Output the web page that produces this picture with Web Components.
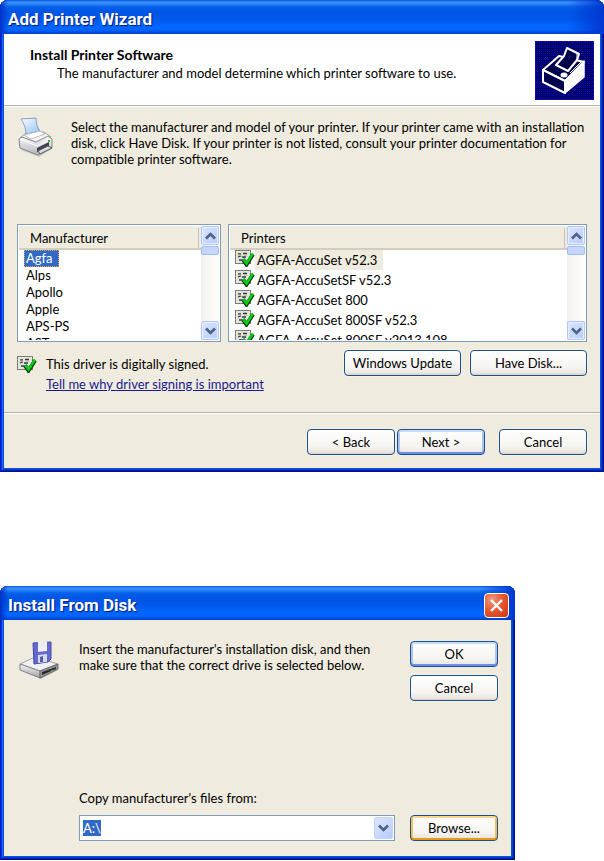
<!DOCTYPE html>
<html lang="en">
<head>
<meta charset="utf-8">
<title>Add Printer Wizard</title>
<style>
  body {
    margin: 0;
    background: #fff;
    color: #000;
    font: 13px/16px Lato, "Liberation Sans", sans-serif;
    --face: #efebde;
    --field-border: #7f9db9;
    --select: #316ac5;
  }
  main {
    display: flex;
    flex-direction: column;
    gap: 114px;
  }
  install-disk {
    width: 100%;
    max-width: 515px;
  }
</style>
</head>
<body>
<main>
  <printer-wizard></printer-wizard>
  <install-disk></install-disk>
</main>

<script>
class XpWindow extends HTMLElement {
  constructor() {
    super();
    this.attachShadow({ mode: 'open' });
  }

  connectedCallback() {
    const close = this.hasAttribute('closable') ? `
      <button type="button" aria-label="Close">
        <svg viewBox="0 0 23 23" width="23" height="23"><path d="M6 6l11 11M17 6L6 17" stroke="#fff" stroke-width="2.4"/></svg>
      </button>` : '';
    this.shadowRoot.innerHTML = `
      <style>
        :host {
          display: block;
        }
        section {
          padding: 0 4px 4px;
          border-radius: 8px 8px 0 0;
          background: #0b4fe0;
          box-shadow: inset 1px 0 #0019cf, inset -1px 0 #00138c, inset 0 -1px #00138c,
            inset 2px 0 #0831d9, inset -2px 0 #001ea0, inset 0 -2px #001ea0,
            inset 3px 0 #166aee, inset -3px 0 #0441d8, inset 0 -3px #0441d8;
        }
        header {
          display: flex;
          align-items: center;
          justify-content: space-between;
          height: 34px;
          box-sizing: border-box;
          margin: 0 -4px;
          padding: 4px 6px 0 8px;
          border-radius: 8px 8px 0 0;
          background:
            linear-gradient(90deg, #0032c8, transparent 8px, transparent calc(100% - 36px), #0038d0),
            linear-gradient(#0a50dc, #3a92ff 2px, #2b86fb 4px, #0560ea 7px, #0055e5 12px, #0057ea 19px, #0066ff 26px, #0066ff 30px, #005af0 31px, #0040c8 34px);
        }
        h1 {
          margin: 0;
          color: #fff;
          font-family: Roboto, "Liberation Sans", sans-serif;
          font-size: 17px;
          line-height: 24px;
          font-weight: bold;
          text-shadow: 1px 1px 1px #0a1883;
        }
        button {
          display: flex;
          padding: 0;
          border: 1px solid #fff;
          border-radius: 4px;
          background: radial-gradient(circle at 30% 25%, #f0997c, #e4542e 50%, #c8360c);
        }
        .body {
          background: var(--face);
        }
      </style>
      <section>
        <header><h1>${this.getAttribute('title-text')}</h1>${close}</header>
        <div class="body"><slot></slot></div>
      </section>
    `;
  }
}

class XpButton extends HTMLElement {
  constructor() {
    super();
    this.attachShadow({ mode: 'open' });
    this.shadowRoot.innerHTML = `
      <style>
        :host {
          display: block;
          width: 88px;
        }
        :host([wide]) {
          width: 117px;
        }
        button {
          width: 100%;
          height: 26px;
          padding: 0;
          border: 1px solid #1d4f86;
          border-radius: 4px;
          background: linear-gradient(#fff, #f5f4f0 70%, #ebe7e2 90%, #d8d0c8);
          color: inherit;
          font: inherit;
          box-shadow: 0 0 0 1px rgba(255, 255, 255, 0.3);
        }
        :host([primary]) button {
          box-shadow: inset 0 2px #c6dcfb, inset 0 -2px #6a8eea, inset 2px 0 #a9c4f5, inset -2px 0 #a9c4f5;
        }
        :host([hot]) button {
          box-shadow: inset 0 2px #fcd48a, inset 0 -2px #e79a12, inset 2px 0 #f9bf57, inset -2px 0 #f9bf57;
        }
      </style>
      <button type="button"><slot></slot></button>
    `;
  }
}

// Single column list view with a header and a scroll bar
class XpList extends HTMLElement {
  constructor() {
    super();
    this.attachShadow({ mode: 'open' });
  }

  connectedCallback() {
    const signed = this.hasAttribute('signed');
    const rows = this.getAttribute('items').split('|').map((name, i) => `
      <tr><td>${signed ? '<signed-icon></signed-icon>' : ''}<span class="${i === 0 ? 'current' : ''}">${name}</span></td></tr>`).join('');
    this.shadowRoot.innerHTML = `
      <style>
        :host {
          display: flex;
          box-sizing: border-box;
          height: 118px;
          padding: 1px;
          border: 1px solid var(--field-border);
          background: #fff;
          overflow: hidden;
        }
        .view {
          flex: 1;
          min-width: 0;
          overflow: hidden;
        }
        table {
          width: 100%;
          border-spacing: 0;
        }
        th {
          height: 24px;
          box-sizing: border-box;
          padding: 2px 2px 0 11px;
          border-bottom: 2px solid #d3cdbb;
          background: var(--face);
          font-weight: normal;
          text-align: left;
          line-height: 20px;
        }
        th div {
          border-right: 1px solid #c7c5b2;
        }
        td {
          height: 17px;
          padding: 0 5px;
          line-height: 17px;
          white-space: nowrap;
          vertical-align: top;
        }
        td span {
          display: inline-block;
          padding: 0 2px;
          vertical-align: top;
        }
        .current {
          padding-right: 6px;
          background: var(--select);
          color: #fff;
          outline: 1px dotted #e0a050;
          outline-offset: -1px;
        }
        :host([signed]) td,
        :host([signed]) td span {
          height: 20px;
          line-height: 20px;
        }
        :host([signed]) .current {
          background: var(--face);
          color: inherit;
          outline: none;
        }
        signed-icon {
          vertical-align: top;
        }
        .bar {
          display: flex;
          flex-direction: column;
          width: 18px;
          background: linear-gradient(90deg, #f3f1ec, #fefefb);
        }
        .bar button {
          display: flex;
          align-items: center;
          justify-content: center;
          height: 19px;
          padding: 0;
          border: 1px solid #b2c7f5;
          border-radius: 2px;
          background: linear-gradient(135deg, #dbe6ff, #b7cbfb);
          box-shadow: inset 0 0 0 1px #e6eeff;
        }
        .thumb {
          height: 7px;
          margin: 1px 0 auto;
          border: 1px solid #a5bcf3;
          border-radius: 2px;
          background: #c6d6fd;
        }
      </style>
      <div class="view">
        <table>
          <thead><tr><th scope="col"><div>${this.getAttribute('heading')}</div></th></tr></thead>
          <tbody>${rows}</tbody>
        </table>
      </div>
      <div class="bar">
        <button type="button" aria-label="Scroll up"><svg width="11" height="8" viewBox="0 0 11 8"><path d="M1 6.5l4.5-4.500 4.500 4.500" fill="none" stroke="#4d6185" stroke-width="2.6"/></svg></button>
        <div class="thumb"></div>
        <button type="button" aria-label="Scroll down"><svg width="11" height="8" viewBox="0 0 11 8"><path d="M1 1.5l4.500 4.500 4.500-4.500" fill="none" stroke="#4d6185" stroke-width="2.6"/></svg></button>
      </div>
    `;
  }
}

class SignedIcon extends HTMLElement {
  constructor() {
    super();
    this.attachShadow({ mode: 'open' });
    this.shadowRoot.innerHTML = `
      <style>
        :host {
          display: inline-block;
          width: 20px;
          height: 17px;
        }
        svg {
          display: block;
        }
      </style>
      <svg width="20" height="17" viewBox="0 0 20 17" aria-hidden="true">
        <path d="M.5 .5h15v13H.5z" fill="#e4e5df" stroke="#8d918a"/>
        <path d="M.5 .5h15v13H.5z" fill="none" stroke="#555" stroke-dasharray="1 2"/>
        <path d="M3 4h3M8 3.500h4M3 7l3-1M7 7h4M4 10h4" stroke="#34344a" stroke-width="1.300"/>
        <path d="M3 5h3M9 5h3" stroke="#b9b25c"/>
        <path d="M8 9.500l3.500 5L18 4.500" fill="none" stroke="#053a08" stroke-width="4"/>
        <path d="M8 9l3.500 4.500L18 3.500" fill="none" stroke="#0ecb18" stroke-width="2.600"/>
      </svg>
    `;
  }
}

// Text box with a drop button
class XpCombo extends HTMLElement {
  constructor() {
    super();
    this.attachShadow({ mode: 'open' });
  }

  connectedCallback() {
    this.shadowRoot.innerHTML = `
      <style>
        :host {
          display: block;
        }
        label {
          display: block;
          margin-bottom: 9px;
        }
        .field {
          display: flex;
          height: 26px;
          box-sizing: border-box;
          padding: 1px;
          border: 1px solid var(--field-border);
          background: #fff;
        }
        input {
          flex: 1;
          min-width: 0;
          padding: 0 2px;
          border: 0;
          outline: none;
          background: none;
          font: inherit;
        }
        input::selection {
          background: var(--select);
          color: #fff;
        }
        button {
          display: flex;
          align-items: center;
          justify-content: center;
          width: 19px;
          padding: 0;
          border: 1px solid #c4d3f8;
          border-radius: 2px;
          background: linear-gradient(135deg, #dbe6ff, #b7cbfb);
        }
      </style>
      <label for="path">${this.getAttribute('label')}</label>
      <div class="field">
        <input id="path" type="text" value="${this.getAttribute('value')}" autocomplete="off" spellcheck="false">
        <button type="button" aria-label="Show drives"><svg width="11" height="8" viewBox="0 0 11 8"><path d="M1 1.5l4.500 4.500 4.500-4.500" fill="none" stroke="#4d6185" stroke-width="2.6"/></svg></button>
      </div>
    `;
    const input = this.shadowRoot.getElementById('path');
    input.focus({ preventScroll: true });
    input.select();
  }
}

class PrinterWizard extends HTMLElement {
  constructor() {
    super();
    this.attachShadow({ mode: 'open' });
    this.shadowRoot.innerHTML = `
      <style>
        :host {
          display: block;
        }
        h2, p {
          margin: 0;
        }
        .banner {
          display: flex;
          justify-content: space-between;
          padding: 7px 6px 5px 26px;
          border-bottom: 1px solid #b5b2a4;
          background: #fff;
        }
        .banner h2 {
          font-size: 14px;
          line-height: 16px;
          padding-top: 6px;
        }
        .banner p {
          padding-left: 27px;
          line-height: 20px;
        }
        .banner svg {
          flex: none;
        }
        .content {
          padding: 10px 13px 18px;
          border-top: 1px solid #fff;
        }
        .intro {
          display: flex;
          gap: 16px;
          min-height: 107px;
        }
        .intro p {
          padding-top: 2px;
        }
        .intro svg {
          flex: none;
        }
        .lists {
          display: grid;
          grid-template-columns: 204fr 359fr;
          gap: 7px;
        }
        .driver {
          display: flex;
          gap: 9px;
          margin-top: 8px;
        }
        .driver signed-icon {
          padding-top: 6px;
        }
        .driver p {
          flex: 1;
          padding-top: 4px;
          line-height: 20px;
        }
        a {
          color: #1a1a90;
        }
        .buttons {
          display: flex;
          justify-content: flex-end;
          gap: 2px;
          padding: 16px 13px 13px;
          border-top: 1px solid #b5b2a4;
          box-shadow: inset 0 1px #fff;
        }
        .buttons :last-child {
          margin-left: 12px;
        }
      </style>
      <xp-window title-text="Add Printer Wizard">
        <div class="banner">
          <div>
            <h2>Install Printer Software</h2>
            <p>The manufacturer and model determine which printer software to use.</p>
          </div>
          <svg width="59" height="59" viewBox="0 0 59 59" aria-hidden="true">
            <defs>
              <pattern id="weave" width="4" height="4" patternUnits="userSpaceOnUse">
                <path d="M0 0h4v4H0z" fill="#000048"/>
                <path d="M0 0h1v1H0zM2 2h1v1H2zM2 0h1v1H2zM0 2h1v1H0zM1 1h1v1H1z" fill="#0000e0"/>
              </pattern>
            </defs>
            <path d="M0 0h59v59H0z" fill="url(#weave)"/>
            <path d="M.5 .5h58v58H.5z" fill="none" stroke="#0a0ab0"/>
            <path d="M8 29L24 15 49 21 30 40z" fill="#00004c" stroke="#fff" stroke-width="2" stroke-linejoin="round"/>
            <path d="M8 29v12l22 11V40z" fill="#00004c" stroke="#fff" stroke-width="2" stroke-linejoin="round"/>
            <path d="M30 40l19-20v16L30 52z" fill="#fff" stroke="#fff" stroke-width="1.500" stroke-linejoin="round"/>
            <path d="M32 7l12 6-2 6-9 11-12-6 8-9z" fill="#00004c" stroke="#fff" stroke-width="2" stroke-linejoin="round"/>
            <path d="M42 13v6l4 2-11 11" fill="none" stroke="#fff"/>
            <ellipse cx="29" cy="34" rx="3.500" ry="2.500" fill="#fff"/>
          </svg>
        </div>
        <div class="content">
          <div class="intro">
            <svg width="38" height="40" viewBox="0 0 38 40" aria-hidden="true">
              <defs>
                <linearGradient id="sheet" x2="1" y2="1"><stop stop-color="#fff"/><stop offset="1" stop-color="#8fc0f8"/></linearGradient>
                <linearGradient id="shell" x2="0" y2="1"><stop stop-color="#fcfcfc"/><stop offset="1" stop-color="#b4b4bc"/></linearGradient>
              </defs>
              <path d="M4 33l18 7 14-9-3-4z" fill="#000" opacity=".15"/>
              <path d="M3 21l6-5 18-1 7 5-12 8z" fill="#f5f5f5" stroke="#999ba2"/>
              <path d="M4 2l15-1c0 5 1 9 4 13L9 17C9 11 7 7 4 2z" fill="url(#sheet)" stroke="#8b9fc0"/>
              <path d="M7 18l16-4 5 3-14 5z" fill="#fff" stroke="#bbb"/>
              <path d="M2 22l3-2 14 5 12-6 4 3v8l-14 8L3 31z" fill="url(#shell)" stroke="#85868e"/>
              <path d="M3 22l17 7 14-7" fill="none" stroke="#fff"/>
              <path d="M20 31l12-6v4l-12 6z" fill="#3e414c"/>
              <path d="M21 34l10-5 4 2-12 6z" fill="#dcdde2" stroke="#555966"/>
              <path d="M31 23h2v2h-2z" fill="#22c822"/>
            </svg>
            <p>Select the manufacturer and model of your printer. If your printer came with an installation disk, click Have Disk. If your printer is not listed, consult your printer documentation for compatible printer software.</p>
          </div>
          <div class="lists">
            <xp-list heading="Manufacturer" items="Agfa|Alps|Apollo|Apple|APS-PS|AST"></xp-list>
            <xp-list signed heading="Printers" items="AGFA-AccuSet v52.3|AGFA-AccuSetSF v52.3|AGFA-AccuSet 800|AGFA-AccuSet 800SF v52.3|AGFA-AccuSet 800SF v2013.108"></xp-list>
          </div>
          <div class="driver">
            <signed-icon></signed-icon>
            <p>This driver is digitally signed.<br><a href="#signing">Tell me why driver signing is important</a></p>
            <xp-button wide>Windows Update</xp-button>
            <xp-button wide>Have Disk...</xp-button>
          </div>
        </div>
        <div class="buttons">
          <xp-button>&lt; Back</xp-button>
          <xp-button primary>Next &gt;</xp-button>
          <xp-button>Cancel</xp-button>
        </div>
      </xp-window>
    `;
  }
}

class InstallDisk extends HTMLElement {
  constructor() {
    super();
    this.attachShadow({ mode: 'open' });
    this.shadowRoot.innerHTML = `
      <style>
        :host {
          display: block;
        }
        .content {
          padding: 21px 13px 15px 15px;
        }
        .top {
          display: flex;
          min-height: 149px;
          gap: 19px;
        }
        p {
          flex: 1;
          max-width: 300px;
          margin: 0;
        }
        .actions {
          display: flex;
          flex-direction: column;
          gap: 8px;
          margin-left: auto;
        }
        .from {
          display: flex;
          align-items: flex-end;
          gap: 15px;
          padding-left: 60px;
        }
        xp-combo {
          flex: 1;
        }
      </style>
      <xp-window title-text="Install From Disk" closable>
        <div class="content">
          <div class="top">
            <svg width="41" height="38" viewBox="0 0 41 38" aria-hidden="true">
              <defs>
                <linearGradient id="drive" x2="0" y2="1"><stop stop-color="#f6f6f6"/><stop offset="1" stop-color="#a2a2a6"/></linearGradient>
              </defs>
              <path d="M3 28l19 10 17-9-4-4z" fill="#000" opacity=".2"/>
              <path d="M1 23l15-7 23 7-18 7z" fill="#f0f0f0" stroke="#a0a0a0"/>
              <path d="M1 23l20 7v7L1 29z" fill="url(#drive)" stroke="#85858a"/>
              <path d="M21 30l18-7v5l-18 9z" fill="#96969b" stroke="#66666c"/>
              <path d="M23 31l14-5v2l-14 6z" fill="#292930"/>
              <path d="M32 29h2v1h-2z" fill="#35d235"/>
              <path d="M14 2l18-1v17l-3 3-14 2z" fill="#6468cf" stroke="#4549a6"/>
              <path d="M19 1l9-1v10l-9 1z" fill="#eeeef3"/>
              <path d="M19 14l9-1v8l-9 1z" fill="#d5dae8"/>
              <path d="M21 16l3-1v6h-3z" fill="#555caf"/>
            </svg>
            <p>Insert the manufacturer's installation disk, and then make sure that the correct drive is selected below.</p>
            <div class="actions">
              <xp-button primary>OK</xp-button>
              <xp-button>Cancel</xp-button>
            </div>
          </div>
          <div class="from">
            <xp-combo label="Copy manufacturer's files from:" value="A:\\"></xp-combo>
            <xp-button hot>Browse...</xp-button>
          </div>
        </div>
      </xp-window>
    `;
  }
}

customElements.define('xp-window', XpWindow);
customElements.define('xp-button', XpButton);
customElements.define('signed-icon', SignedIcon);
customElements.define('xp-list', XpList);
customElements.define('xp-combo', XpCombo);
customElements.define('printer-wizard', PrinterWizard);
customElements.define('install-disk', InstallDisk);
</script>
</body>
</html>
